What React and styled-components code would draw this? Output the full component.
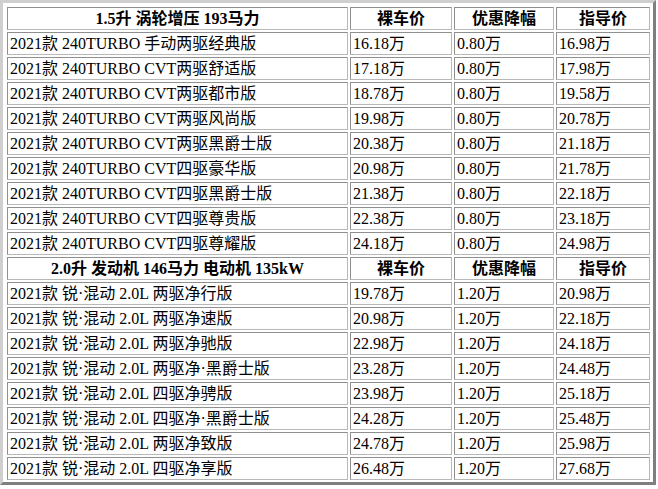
import React from 'react'
import styled, { createGlobalStyle } from 'styled-components'

const GlobalStyle = createGlobalStyle`
  html, body {
    margin: 0;
    padding: 0;
    background: #fff;
  }
`

const PriceTable = styled.table`
  border-collapse: separate;
  border-spacing: 2px;
  border-style: solid;
  border-width: 3px;
  border-color: #cfcfcf #7f7f7f #7f7f7f #cfcfcf;
  padding: 2px 1px 0 2px;
  table-layout: fixed;
  font-family: "Liberation Serif", "Noto Sans CJK SC", serif;
  font-size: 16px;
  color: #000;
`

const Cell = styled.td`
  box-sizing: border-box;
  border: 1px solid #a3a3a3;
  border-color: #8f8f8f #b8b8b8 #b8b8b8 #8f8f8f;
  height: 23px;
  padding: 0 2px 0 2px;
  line-height: 21px;
  white-space: nowrap;
  overflow: hidden;
  width: ${(p) => p.w}px;
`

const HeadCell = styled(Cell)`
  font-weight: bold;
  text-align: center;
`

const cols = [341, 102, 100, 94]

const groups = [
  {
    title: '1.5升 涡轮增压 193马力',
    cut: '0.80万',
    rows: [
      ['2021款 240TURBO 手动两驱经典版', '16.18万', '16.98万'],
      ['2021款 240TURBO CVT两驱舒适版', '17.18万', '17.98万'],
      ['2021款 240TURBO CVT两驱都市版', '18.78万', '19.58万'],
      ['2021款 240TURBO CVT两驱风尚版', '19.98万', '20.78万'],
      ['2021款 240TURBO CVT两驱黑爵士版', '20.38万', '21.18万'],
      ['2021款 240TURBO CVT四驱豪华版', '20.98万', '21.78万'],
      ['2021款 240TURBO CVT四驱黑爵士版', '21.38万', '22.18万'],
      ['2021款 240TURBO CVT四驱尊贵版', '22.38万', '23.18万'],
      ['2021款 240TURBO CVT四驱尊耀版', '24.18万', '24.98万'],
    ],
  },
  {
    title: '2.0升 发动机 146马力 电动机 135kW',
    cut: '1.20万',
    rows: [
      ['2021款 锐·混动 2.0L 两驱净行版', '19.78万', '20.98万'],
      ['2021款 锐·混动 2.0L 两驱净速版', '20.98万', '22.18万'],
      ['2021款 锐·混动 2.0L 两驱净驰版', '22.98万', '24.18万'],
      ['2021款 锐·混动 2.0L 两驱净·黑爵士版', '23.28万', '24.48万'],
      ['2021款 锐·混动 2.0L 四驱净骋版', '23.98万', '25.18万'],
      ['2021款 锐·混动 2.0L 四驱净·黑爵士版', '24.28万', '25.48万'],
      ['2021款 锐·混动 2.0L 两驱净致版', '24.78万', '25.98万'],
      ['2021款 锐·混动 2.0L 四驱净享版', '26.48万', '27.68万'],
    ],
  },
]

const App = () => (
  <>
    <GlobalStyle />
    <PriceTable>
      <tbody>
        {groups.map((g) => (
          <React.Fragment key={g.title}>
            <tr>
              <HeadCell w={cols[0]}>{g.title}</HeadCell>
              <HeadCell w={cols[1]}>裸车价</HeadCell>
              <HeadCell w={cols[2]}>优惠降幅</HeadCell>
              <HeadCell w={cols[3]}>指导价</HeadCell>
            </tr>
            {g.rows.map(([name, bare, guide]) => (
              <tr key={name}>
                <Cell w={cols[0]}>{name}</Cell>
                <Cell w={cols[1]}>{bare}</Cell>
                <Cell w={cols[2]}>{g.cut}</Cell>
                <Cell w={cols[3]}>{guide}</Cell>
              </tr>
            ))}
          </React.Fragment>
        ))}
      </tbody>
    </PriceTable>
  </>
)

export default App
